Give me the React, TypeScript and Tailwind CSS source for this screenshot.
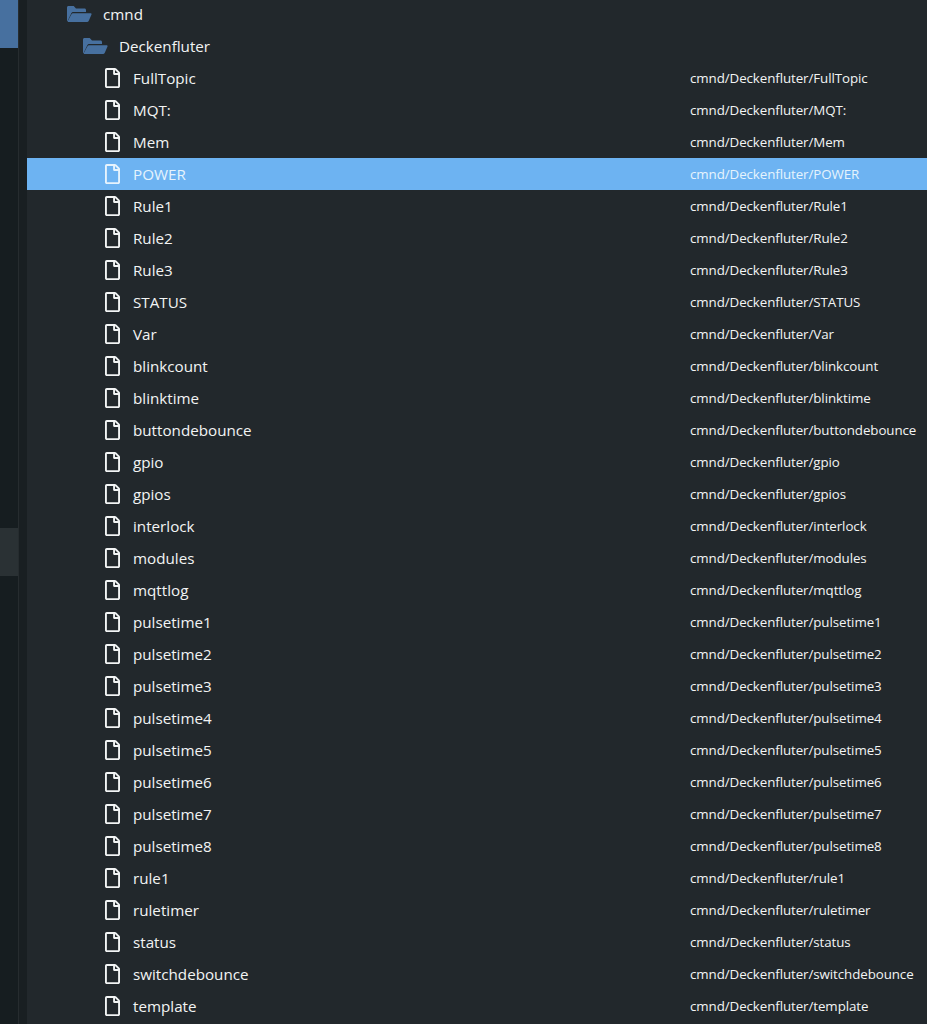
import { FaRegFile } from "react-icons/fa";

const topics = [
  "FullTopic", "MQT:", "Mem", "POWER", "Rule1", "Rule2", "Rule3", "STATUS", "Var",
  "blinkcount", "blinktime", "buttondebounce", "gpio", "gpios", "interlock", "modules",
  "mqttlog", "pulsetime1", "pulsetime2", "pulsetime3", "pulsetime4", "pulsetime5",
  "pulsetime6", "pulsetime7", "pulsetime8", "rule1", "ruletimer", "status",
  "switchdebounce", "template",
];

function FolderOpen() {
  return (
    <svg width="26" height="18" viewBox="0 0 26 18" className="shrink-0">
      <path d="M1 16V2.5C1 1.6 1.6 1 2.5 1h5.2l2.3 2.6h8.5c.9 0 1.5.6 1.5 1.5V7H7.5c-1 0-1.8.5-2.3 1.4L1.6 16z" fill="#47709f" />
      <path d="M7.3 8.2h17.2c.9 0 1.3.6 1 1.3l-2.7 6.3c-.4.8-1 1.2-1.8 1.2H2.6c-.8 0-1.1-.5-.8-1.1l3.5-6.4c.5-.9 1.1-1.3 2-1.3z" fill="#47709f" />
    </svg>
  );
}

export default function App() {
  return (
    <main className="flex h-[1024px] w-[927px] overflow-hidden bg-[#22282c] font-['Open_Sans','Liberation_Sans',sans-serif] text-[#f2f4f4]">
      <aside className="flex w-[18px] shrink-0 flex-col bg-[#161d20]">
        <div className="h-[48px] bg-[#47709f]" />
        <div className="mt-[480px] h-[48px] bg-[#2a3134]" />
      </aside>
      <div className="w-[9px] shrink-0 border-l border-[#262c2f] bg-[#191f22]" />
      <section className="-mt-[2px] min-w-0 flex-1">
        <div className="flex h-[32px] items-center gap-[11px] pl-[39px] text-[15.2px]">
          <FolderOpen />
          <span>cmnd</span>
        </div>
        <div className="flex h-[32px] items-center gap-[11px] pl-[55px] text-[15.2px]">
          <FolderOpen />
          <span>Deckenfluter</span>
        </div>
        {topics.map((topic) => (
          <div
            key={topic}
            className={`flex h-[32px] items-center ${topic === "POWER" ? "bg-[#6db3f2] text-[#e6f3fd]" : ""}`}
          >
            <FaRegFile className="ml-[78px] h-[20px] w-[15px] shrink-0" />
            <span className="ml-[13px] w-[557px] shrink-0 text-[15.2px]">{topic}</span>
            <span className="whitespace-nowrap pt-[1px] text-[13.33px] tracking-[-0.08px]">cmnd/Deckenfluter/{topic}</span>
          </div>
        ))}
      </section>
    </main>
  );
}
